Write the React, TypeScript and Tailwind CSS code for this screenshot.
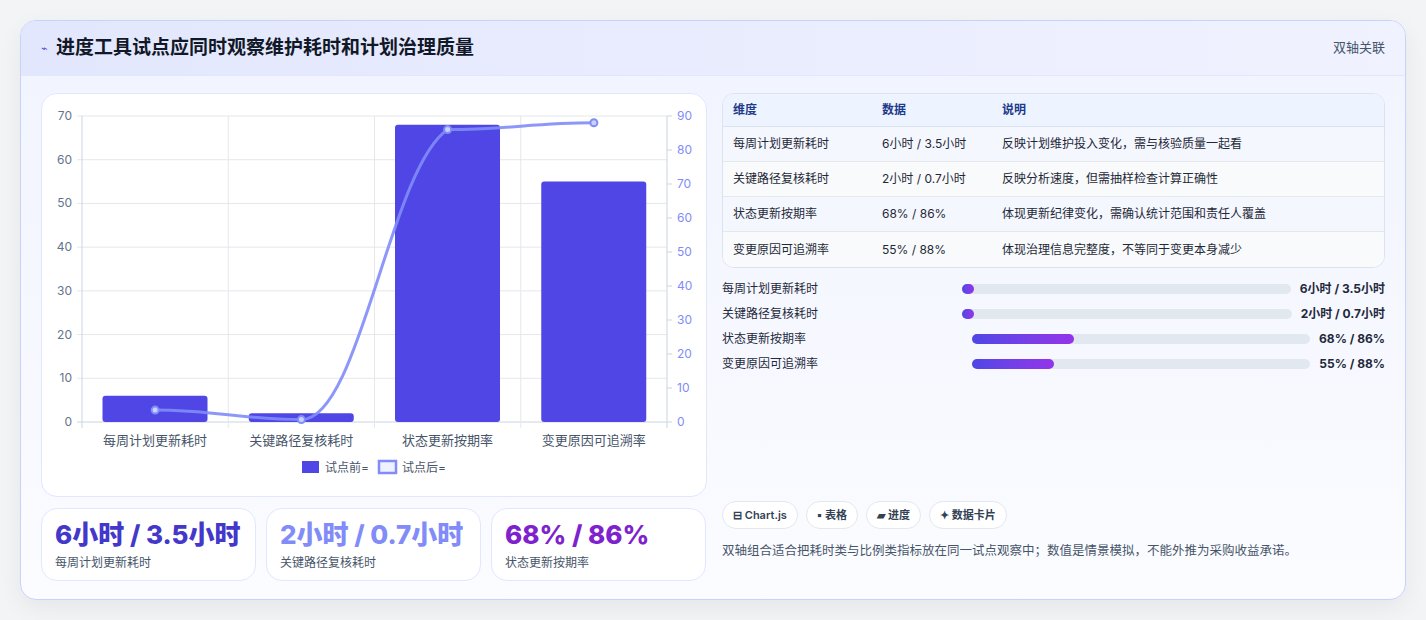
import React from "react";

const cats = ["每周计划更新耗时", "关键路径复核耗时", "状态更新按期率", "变更原因可追溯率"];
const before = [6, 2, 68, 55];
const after = [3.5, 0.7, 86, 88];

function Chart() {
  const L = 40, R = 625, T = 22, B = 328;
  const cw = (R - L) / 4;
  const yL = (v: number) => B - (v / 70) * (B - T);
  const yR = (v: number) => B - (v / 90) * (B - T);
  const pts = after.map((v, i) => [L + cw * (i + 0.5), yR(v)]);
  let d = `M${pts[0][0]},${pts[0][1]}`;
  for (let i = 1; i < pts.length; i++) {
    const [x0, y0] = pts[i - 1];
    const [x1, y1] = pts[i];
    const dx = (x1 - x0) * 0.4;
    d += ` C${x0 + dx},${y0} ${x1 - dx},${i === 2 ? y1 + 40 : y1} ${x1},${y1}`;
  }
  return (
    <svg width="665" height="403" className="block" style={{ fontFamily: "Inter, 'Noto Sans CJK SC', sans-serif" }}>
      {[0, 10, 20, 30, 40, 50, 60, 70].map((v) => (
        <g key={v}>
          <line x1={L - 5} x2={R} y1={yL(v)} y2={yL(v)} stroke={v === 0 ? "#cbd5e1" : "#e5e7eb"} />
          <text x={L - 10} y={yL(v) + 4} textAnchor="end" fontSize="12" fill="#64748b">{v}</text>
        </g>
      ))}
      {[0, 10, 20, 30, 40, 50, 60, 70, 80, 90].map((v) => (
        <g key={v}>
          <line x1={R} x2={R + 5} y1={yR(v)} y2={yR(v)} stroke="#cbd5e1" />
          <text x={R + 10} y={yR(v) + 4} fontSize="12" fill="#818cf8">{v}</text>
        </g>
      ))}
      {[0, 1, 2, 3, 4].map((i) => (
        <line key={i} x1={L + cw * i} x2={L + cw * i} y1={T} y2={B + 6} stroke={i === 0 || i === 4 ? "#cbd5e1" : "#e5e7eb"} />
      ))}
      {before.map((v, i) => (
        <rect key={i} x={L + cw * i + 20.5} y={yL(v)} width={105} height={B - yL(v)} rx={3} fill="#4f46e5" />
      ))}
      <path d={d} fill="none" stroke="#818cf8" strokeWidth="3" strokeOpacity="0.9" />
      {pts.map(([x, y], i) => (
        <circle key={i} cx={x} cy={y} r={3.5} fill="#c7d2fe" stroke="#818cf8" strokeWidth="2" />
      ))}
      {cats.map((c, i) => (
        <text key={c} x={L + cw * (i + 0.5)} y={351} textAnchor="middle" fontSize="13" fill="#475569">{c}</text>
      ))}
      <rect x={260} y={367} width={17} height={12} fill="#4f46e5" />
      <text x={283} y={378} fontSize="12" fill="#475569">试点前=</text>
      <rect x={337} y={367} width={17} height={12} fill="#eef2ff" stroke="#818cf8" strokeWidth="2.5" />
      <text x={360} y={378} fontSize="12" fill="#475569">试点后=</text>
    </svg>
  );
}

const rows = [
  ["每周计划更新耗时", "6小时 / 3.5小时", "反映计划维护投入变化，需与核验质量一起看"],
  ["关键路径复核耗时", "2小时 / 0.7小时", "反映分析速度，但需抽样检查计算正确性"],
  ["状态更新按期率", "68% / 86%", "体现更新纪律变化，需确认统计范围和责任人覆盖"],
  ["变更原因可追溯率", "55% / 88%", "体现治理信息完整度，不等同于变更本身减少"],
];

export default function App() {
  return (
    <div className="min-h-[620px] bg-[#f3f4f6] pt-5 px-5 text-[#1e293b]" style={{ fontFamily: "Inter, 'Noto Sans CJK SC', sans-serif" }}>
      <div className="w-[1386px] h-[580px] rounded-2xl border border-[#c7d2fe] bg-gradient-to-b from-[#f1f3ff] to-[#fbfcff] overflow-hidden shadow-[0_8px_24px_rgba(0,0,0,0.06)]">
        <div className="h-[55px] flex items-center justify-between px-5 bg-gradient-to-r from-[#e3e7fd] to-[#f0f2ff] border-b border-[#e0e7ff]">
          <div className="flex items-center gap-2">
            <span className="text-[#4f46e5] text-[11px]">⌁</span>
            <span className="text-[19px] font-bold text-[#111827]">进度工具试点应同时观察维护耗时和计划治理质量</span>
          </div>
          <span className="text-[13px] text-[#475569]">双轴关联</span>
        </div>
        <div className="flex gap-[15px] px-5 pt-[17px]">
          <div className="w-[666px] flex flex-col gap-[11px]">
            <div className="h-[404px] rounded-2xl border border-[#e0e7ff] bg-white">
              <Chart />
            </div>
            <div className="flex gap-[10px]">
              {[
                ["6小时 / 3.5小时", "每周计划更新耗时", "text-[#4338ca]"],
                ["2小时 / 0.7小时", "关键路径复核耗时", "text-[#818cf8]"],
                ["68% / 86%", "状态更新按期率", "text-[#7e22ce]"],
              ].map(([v, l, c]) => (
                <div key={l} className="w-[215px] h-[73px] rounded-2xl border border-[#e0e7ff] bg-white px-[13px] pt-[9px]">
                  <div className={`text-[26px] font-extrabold leading-[34px] ${c}`}>{v}</div>
                  <div className="text-[12px] text-[#475569] mt-[2px]">{l}</div>
                </div>
              ))}
            </div>
          </div>
          <div className="w-[667px] flex flex-col">
            <div className="rounded-xl border border-[#dbe3f0] bg-white overflow-hidden text-[12px]">
              <div className="flex h-[33px] items-center bg-[#eef4ff] text-[#1e3a8a] font-semibold border-b border-[#dbe3f0]">
                <div className="w-[159px] pl-[10px]">维度</div>
                <div className="w-[120px]">数据</div>
                <div>说明</div>
              </div>
              {rows.map((r, i) => (
                <div key={i} className={`flex h-[35px] items-center text-[#1f2937] ${i % 2 ? "bg-[#f8fafc]" : "bg-[#f5f7ff]"} ${i < 3 ? "border-b border-[#e5e7eb]" : ""}`}>
                  <div className="w-[159px] pl-[10px]">{r[0]}</div>
                  <div className="w-[120px]">{r[1]}</div>
                  <div>{r[2]}</div>
                </div>
              ))}
            </div>
            <div className="mt-[12px] flex flex-col gap-[7px] text-[12px]">
              {[
                ["每周计划更新耗时", "6小时 / 3.5小时", 0, 240],
                ["关键路径复核耗时", "2小时 / 0.7小时", 0, 240],
                ["状态更新按期率", "68% / 86%", 102, 250],
                ["变更原因可追溯率", "55% / 88%", 82, 250],
              ].map(([l, v, w, s]) => (
                <div key={l as string} className="flex items-center h-[18px]">
                  <div className={s === 240 ? "w-[240px]" : "w-[250px]"}>{l}</div>
                  <div className="flex-1 h-[10px] rounded-full bg-[#e2e8f0]">
                    <div className="h-[10px] rounded-full bg-gradient-to-r from-[#4f46e5] to-[#9333ea]" style={{ width: Math.max(w as number, 12) }} />
                  </div>
                  <div className="ml-[9px] font-bold text-right">{v}</div>
                </div>
              ))}
            </div>
            <div className="mt-auto pb-[20px]">
              <div className="flex gap-2 text-[11px] font-semibold text-[#334155]">
                {["⊟ Chart.js", "▪ 表格", "▰ 进度", "✦ 数据卡片"].map((c) => (
                  <span key={c} className="h-[28px] px-[10px] flex items-center rounded-full border border-[#e2e8f0] bg-white">{c}</span>
                ))}
              </div>
              <div className="mt-[13px] text-[12.5px] text-[#475569]">双轴组合适合把耗时类与比例类指标放在同一试点观察中；数值是情景模拟，不能外推为采购收益承诺。</div>
            </div>
          </div>
        </div>
      </div>
    </div>
  );
}
